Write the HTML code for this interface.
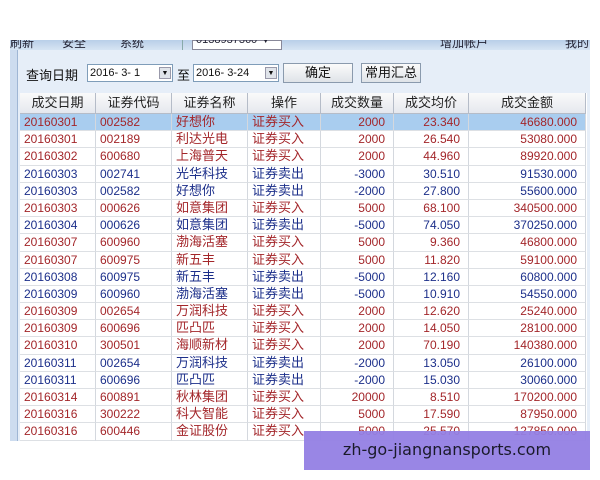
<!DOCTYPE html>
<html><head><meta charset="utf-8"><style>
*{margin:0;padding:0;box-sizing:border-box}
body{width:600px;height:480px;background:#fff;position:relative;overflow:hidden;font-family:"Liberation Sans","Noto Sans CJK SC",sans-serif}
.a{position:absolute}
#tb{left:10px;top:40px;width:580px;height:10px;background:linear-gradient(#b9cfe8,#d6e4f3);overflow:hidden;font-size:12px;color:#223}
#tb span{position:absolute;top:-6px}
#body{left:10px;top:50px;width:580px;height:391px;background:#e6eef8}
#lb{left:10px;top:50px;width:8px;height:391px;background:#cddcef;border-right:1px solid #9fb6d4}
#q{left:20px;top:56px;width:567px;height:33px;font-size:13px;color:#111}
.sel{position:absolute;top:8px;height:18px;background:#fff;border:1px solid #7f9db9;font-size:11px;padding:1px 2px;font-family:"Liberation Sans",sans-serif;overflow:hidden;line-height:15px}
.sel i{position:absolute;right:1px;top:2px;width:12px;height:12px;background:#e0e4ea;border:1px solid #99a;font-style:normal;font-size:7px;text-align:center;line-height:11px}
.btn{position:absolute;top:7px;height:20px;border:1px solid #8a9aad;background:linear-gradient(#fbfbfb,#dfe3e8);font-size:13px;text-align:center;line-height:18px}
#t{position:absolute;left:20px;top:93px;width:567px;height:348px;overflow:hidden;background:#fff}
.r{display:flex;height:17.2px;font-size:12px;line-height:16px}
.r>div{overflow:hidden;white-space:nowrap;border-right:1px solid #d4d8de;border-bottom:1px solid #dde0e4;padding:0 4px}
.hd{height:21px;font-size:13px;line-height:20px;color:#222}
.hd>div{background:linear-gradient(#fafafa,#e5e8ee);border-right:1px solid #b5bcc8;border-bottom:1px solid #b5bcc8;text-align:center}
.r>div:nth-child(1){width:76px}.r>div:nth-child(2){width:76px}.r>div:nth-child(3){width:76px;font-size:13px}.r>div:nth-child(4){width:73px;font-size:13px}
.r>div:nth-child(5){width:73px;text-align:right;padding-right:8px}.r>div:nth-child(6){width:75px;text-align:right;padding-right:8px}.r>div:nth-child(7){width:117px;text-align:right;padding-right:8px}
.hd>div{text-align:center!important;padding:0!important;font-size:13px!important}
.b{color:#a3262a}.s{color:#1c2f8a}
.h>div{background:#a9cdef}
#wm{left:304px;top:431px;width:286px;height:39px;background:rgba(148,128,228,.95);color:#1a1a2a;font-size:16px;text-align:center;line-height:38px;font-family:"DejaVu Sans",sans-serif}
</style></head><body>
<div class="a" id="tb"><span style="left:0">刷新</span><span style="left:52px">安全</span><span style="left:110px">系统</span>
<div class="a" style="left:172px;top:0;width:1px;height:10px;background:#8aa"></div>
<div class="a" style="left:182px;top:0;width:90px;height:10px;background:#fff;border:1px solid #889"></div>
<span style="left:186px;font-size:11px">0138937360 ▼</span><span style="left:430px">增加帐户</span><span style="left:555px">我的</span></div>
<div class="a" id="body"></div>
<div class="a" id="lb"></div>
<div class="a" id="q">
<span class="a" style="left:6px;top:9px">查询日期</span>
<div class="sel" style="left:67px;width:86px">2016- 3- 1<i>▼</i></div>
<span class="a" style="left:157px;top:9px">至</span>
<div class="sel" style="left:173px;width:86px">2016- 3-24<i>▼</i></div>
<div class="btn" style="left:263px;width:70px">确定</div>
<div class="btn" style="left:341px;width:60px">常用汇总</div>
</div>
<div id="t">
<div class="r hd"><div>成交日期</div><div>证券代码</div><div>证券名称</div><div>操作</div><div>成交数量</div><div>成交均价</div><div>成交金额</div></div>
<div class="r b h"><div>20160301</div><div>002582</div><div>好想你</div><div>证券买入</div><div>2000</div><div>23.340</div><div>46680.000</div></div>
<div class="r b"><div>20160301</div><div>002189</div><div>利达光电</div><div>证券买入</div><div>2000</div><div>26.540</div><div>53080.000</div></div>
<div class="r b"><div>20160302</div><div>600680</div><div>上海普天</div><div>证券买入</div><div>2000</div><div>44.960</div><div>89920.000</div></div>
<div class="r s"><div>20160303</div><div>002741</div><div>光华科技</div><div>证券卖出</div><div>-3000</div><div>30.510</div><div>91530.000</div></div>
<div class="r s"><div>20160303</div><div>002582</div><div>好想你</div><div>证券卖出</div><div>-2000</div><div>27.800</div><div>55600.000</div></div>
<div class="r b"><div>20160303</div><div>000626</div><div>如意集团</div><div>证券买入</div><div>5000</div><div>68.100</div><div>340500.000</div></div>
<div class="r s"><div>20160304</div><div>000626</div><div>如意集团</div><div>证券卖出</div><div>-5000</div><div>74.050</div><div>370250.000</div></div>
<div class="r b"><div>20160307</div><div>600960</div><div>渤海活塞</div><div>证券买入</div><div>5000</div><div>9.360</div><div>46800.000</div></div>
<div class="r b"><div>20160307</div><div>600975</div><div>新五丰</div><div>证券买入</div><div>5000</div><div>11.820</div><div>59100.000</div></div>
<div class="r s"><div>20160308</div><div>600975</div><div>新五丰</div><div>证券卖出</div><div>-5000</div><div>12.160</div><div>60800.000</div></div>
<div class="r s"><div>20160309</div><div>600960</div><div>渤海活塞</div><div>证券卖出</div><div>-5000</div><div>10.910</div><div>54550.000</div></div>
<div class="r b"><div>20160309</div><div>002654</div><div>万润科技</div><div>证券买入</div><div>2000</div><div>12.620</div><div>25240.000</div></div>
<div class="r b"><div>20160309</div><div>600696</div><div>匹凸匹</div><div>证券买入</div><div>2000</div><div>14.050</div><div>28100.000</div></div>
<div class="r b"><div>20160310</div><div>300501</div><div>海顺新材</div><div>证券买入</div><div>2000</div><div>70.190</div><div>140380.000</div></div>
<div class="r s"><div>20160311</div><div>002654</div><div>万润科技</div><div>证券卖出</div><div>-2000</div><div>13.050</div><div>26100.000</div></div>
<div class="r s"><div>20160311</div><div>600696</div><div>匹凸匹</div><div>证券卖出</div><div>-2000</div><div>15.030</div><div>30060.000</div></div>
<div class="r b"><div>20160314</div><div>600891</div><div>秋林集团</div><div>证券买入</div><div>20000</div><div>8.510</div><div>170200.000</div></div>
<div class="r b"><div>20160316</div><div>300222</div><div>科大智能</div><div>证券买入</div><div>5000</div><div>17.590</div><div>87950.000</div></div>
<div class="r b"><div>20160316</div><div>600446</div><div>金证股份</div><div>证券买入</div><div>5000</div><div>25.570</div><div>127850.000</div></div>
</div>
<div class="a" id="wm">zh-go-jiangnansports.com</div>
</body></html>
